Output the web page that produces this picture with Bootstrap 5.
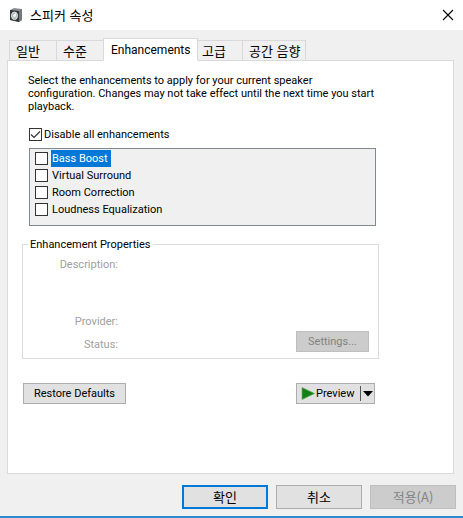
<!DOCTYPE html>
<html lang="ko">
<head>
<meta charset="utf-8">
<meta name="viewport" content="width=device-width, initial-scale=1">
<title>스피커 속성</title>
<link rel="stylesheet" href="https://cdn.jsdelivr.net/npm/bootstrap@5.3.0/dist/css/bootstrap.min.css">
<style>
body { background: #f0f0f0; color: #000; font: 11px/13px Roboto, "Noto Sans CJK KR", sans-serif; }
.window { border-bottom: 2px solid #2a8ad4; }
.titlebar { height: 30px; padding: 0 9px; font: 13px/20px "Noto Sans CJK KR", sans-serif; }
.titlebar h1 { font: inherit; margin: 0 0 0 7px; }
.close-btn { width: 12px; height: 12px; }
.body-area { padding: 8px 9px 0 7px; }
.sheet-tabs { --bs-nav-tabs-border-width: 0; padding-left: 2px; margin-bottom: -1px; border: 0; }
.sheet-tabs .nav-link { height: 21px; padding: 0 6px; margin: 0 -1px 0 0; border: 1px solid #d9d9d9; border-radius: 0; color: #000; background: #f0f0f0; font: 13px/18px "Noto Sans CJK KR", sans-serif; text-align: left; white-space: nowrap; }
.sheet-tabs .nav-link.active { width: 95px; height: 23px; padding: 0 7px; background: #fff; color: #000; border-color: #d9d9d9; border-bottom-color: #fff; font: 12px/18px Roboto, sans-serif; position: relative; z-index: 1; }
.sheet-tabs .tab-short { width: 48px; }
.sheet-tabs .after-active { width: 46px; padding-left: 4px; }
.sheet-tabs .tab-long { width: 64px; }
.panel { border: 1px solid #d9d9d9; padding: 13px 74px 20px 14px; }
.intro { margin: 0 -6px 15px 6px; }
.inset { margin-left: 7px; }
.tick.tick { flex: none; width: 13px; height: 13px; margin: 0; border: 1px solid #333; border-radius: 0; background-color: #fff; }
.tick.tick:checked { background-size: 13px 13px; background-image: url("data:image/svg+xml,%3Csvg xmlns='http://www.w3.org/2000/svg' viewBox='0 0 13 13'%3E%3Cpath d='M2 6.500l3 3 6-6' fill='none' stroke='%23333' stroke-width='1.2'/%3E%3C/svg%3E"); }
.toggle-label { padding-left: 2px; }
.effects { border: 1px solid #828790; background: #f0f0f0; padding: 1px 5px 7px; margin: 7px 3px 12px 7px; }
.effects li { height: 17px; }
.effects label { padding: 2px 3px 2px 1px; margin-left: 3px; }
.effects .chosen { background: #0078d7; color: #fff; }
.group { border: 1px solid #dcdcdc; height: 121px; }
.group legend { float: none; width: auto; font: inherit; margin: 0 0 0 5px; padding: 0 2px; }
.group .names { width: 95px; color: #a0a0a0; text-align: right; padding: 7px 0; }
.group .provider { margin-bottom: 10px; }
.push { border: 1px solid #adadad; border-radius: 0; background: #e1e1e1; color: #000; font-size: 11px; line-height: 13px; padding: 3px 0; height: 21px; }
.push:disabled { background: #ccc; border-color: #bfbfbf; color: #838383; opacity: 1; }
.w-settings { width: 73px; margin: 0 9px 6px 0; }
.w-restore { width: 103px; }
.push-row { margin: 0 4px 0 1px; }
.w-preview { width: 65px; border-right: 0; padding-left: 4px; gap: 1px; }
.w-drop { width: 15px; border-left: 0; gap: 1px; }
.divider { border-left: 1px solid #555; height: 15px; }
.actions { padding: 11px 7px 7px; gap: 8px; }
.actions .push { width: 86px; height: 24px; font: 13px/18px "Noto Sans CJK KR", sans-serif; padding: 0; }
.actions .default { border: 2px solid #0078d7; }
</style>
<script src="https://cdn.jsdelivr.net/npm/bootstrap@5.3.0/dist/js/bootstrap.bundle.min.js"></script>
</head>
<body>
<div class="window d-flex flex-column min-vh-100">
  <header class="titlebar bg-white d-flex align-items-center">
    <svg width="14" height="16" viewBox="0 0 14 16" aria-hidden="true">
      <path d="M1 3l4-2 8 1v11l-3 2-9-2z" fill="#8b8d90"/>
      <path d="M1 3l9 1v11l-9-2z" fill="#35383a"/>
      <path d="M10 4l3-2v11l-3 2z" fill="#74777a"/>
      <ellipse cx="5.500" cy="8.800" rx="3" ry="3.800" fill="#aeb8ba" stroke="#e3e9e9"/>
      <path d="M4 8l3-2v3l-2 2z" fill="#eef3f3"/>
    </svg>
    <h1>스피커 속성</h1>
    <button class="close-btn btn p-0 border-0 ms-auto d-flex" type="button" aria-label="닫기">
      <svg width="12" height="12" viewBox="0 0 12 12"><path d="M1 1l10 10M11 1L1 11" stroke="#000" stroke-width="1.1"/></svg>
    </button>
  </header>
  <main class="body-area d-flex flex-column flex-grow-1">
    <div class="sheet-tabs nav nav-tabs flex-nowrap align-items-end" role="tablist">
      <button class="nav-link tab-short" type="button" role="tab">일반</button>
      <button class="nav-link tab-short" type="button" role="tab">수준</button>
      <button class="nav-link active" type="button" role="tab" aria-selected="true">Enhancements</button>
      <button class="nav-link after-active" type="button" role="tab">고급</button>
      <button class="nav-link tab-long" type="button" role="tab">공간 음향</button>
    </div>
    <section class="panel bg-white flex-grow-1" role="tabpanel">
      <p class="intro">Select the enhancements to apply for your current speaker<br>configuration. Changes may not take effect until the next time you start<br>playback.</p>
      <div class="inset d-flex align-items-center">
        <input class="form-check-input tick" type="checkbox" id="all" checked>
        <label class="toggle-label" for="all">Disable all enhancements</label>
      </div>
      <ul class="effects list-unstyled">
        <li class="d-flex align-items-center"><input class="form-check-input tick" type="checkbox" id="bass"><label class="chosen" for="bass">Bass Boost</label></li>
        <li class="d-flex align-items-center"><input class="form-check-input tick" type="checkbox" id="virt"><label for="virt">Virtual Surround</label></li>
        <li class="d-flex align-items-center"><input class="form-check-input tick" type="checkbox" id="room"><label for="room">Room Correction</label></li>
        <li class="d-flex align-items-center"><input class="form-check-input tick" type="checkbox" id="loud"><label for="loud">Loudness Equalization</label></li>
      </ul>
      <fieldset class="group d-flex flex-column mb-4">
        <legend>Enhancement Properties</legend>
        <div class="d-flex flex-grow-1 justify-content-between">
          <div class="names d-flex flex-column">
            <div class="mb-auto">Description:</div>
            <div class="provider">Provider:</div>
            <div>Status:</div>
          </div>
          <button class="btn push w-settings align-self-end" type="button" disabled>Settings...</button>
        </div>
      </fieldset>
      <div class="push-row d-flex justify-content-between">
        <button class="btn push w-restore" type="button">Restore Defaults</button>
        <div class="btn-group">
          <button class="btn push w-preview d-flex align-items-center" type="button">
            <svg width="14" height="13" viewBox="0 0 14 13" aria-hidden="true"><path d="M1 0.500L13.500 6.500 1 12.500z" fill="#128012" stroke="#64a864" stroke-width=".7"/></svg>
            <span>Preview</span>
          </button>
          <button class="btn push w-drop d-flex align-items-center" type="button" aria-label="Preview options">
            <span class="divider"></span>
            <svg width="11" height="6" viewBox="0 0 11 6" aria-hidden="true"><path d="M1 0h10L6 5.500z"/></svg>
          </button>
        </div>
      </div>
    </section>
  </main>
  <footer class="actions d-flex justify-content-end">
    <button class="btn push default" type="button">확인</button>
    <button class="btn push" type="button">취소</button>
    <button class="btn push" type="button" disabled>적용(A)</button>
  </footer>
</div>
</body>
</html>
